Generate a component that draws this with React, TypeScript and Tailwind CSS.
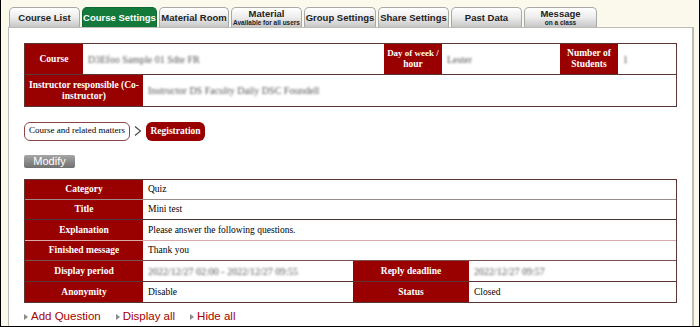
import React from 'react';

const tabs = [
  { label: 'Course List', w: 'w-[71px]' },
  { label: 'Course Settings', w: 'w-[75px]', active: true },
  { label: 'Material Room', w: 'w-[70px]' },
  { label: 'Material', sub: 'Available for all users', w: 'w-[71px]' },
  { label: 'Group Settings', w: 'w-[72px]' },
  { label: 'Share Settings', w: 'w-[71px]' },
  { label: 'Past Data', w: 'w-[71px]' },
  { label: 'Message', sub: 'on a class', w: 'w-[73px]' },
];

const serif = "font-['Liberation_Serif',serif]";
const sans = "font-['Liberation_Sans',Arial,sans-serif]";

function Head({ children, className = '' }: { children: React.ReactNode; className?: string }) {
  return (
    <div
      className={`flex items-center justify-center bg-[#990000] text-white font-bold text-[9.5px] leading-[11px] text-center px-[2px] ${className}`}
    >
      <span>{children}</span>
    </div>
  );
}

function Val({ children, blur, className = '' }: { children: React.ReactNode; blur?: boolean; className?: string }) {
  return (
    <div className={`flex items-center bg-white px-[5px] text-[9.5px] text-black ${className}`}>
      <span className={blur ? 'blur-[1px] text-[#555] text-[10px]' : ''}>{children}</span>
    </div>
  );
}

export default function App() {
  return (
    <div className="w-[700px] h-[327px] overflow-hidden bg-[#fbf8ec] border-l border-r border-b border-black">
      <div className="pl-[7px] pt-[7px]">
        {/* tabs */}
        <div className={`flex gap-[2px] ml-[1px] ${sans}`}>
          {tabs.map((t) => (
            <div
              key={t.label}
              className={`${t.w} h-[20px] rounded-t-[5px] border border-b-0 flex flex-col items-center justify-center font-bold ${
                t.active
                  ? 'bg-[#137a3b] border-[#0f6a32] text-white'
                  : 'bg-gradient-to-b from-white via-[#ececec] to-[#c6c6c6] border-[#a8a8a8] text-[#222]'
              }`}
            >
              <span className={t.sub ? 'text-[9.5px] leading-[10px]' : 'text-[9.5px] leading-[11px]'}>{t.label}</span>
              {t.sub && <span className="text-[6.5px] leading-[7px] whitespace-nowrap">{t.sub}</span>}
            </div>
          ))}
        </div>

        {/* panel */}
        <div className="w-[686px] h-[320px] bg-white border-l border-t border-r-2 border-[#bdbdb5] pl-[15px] pt-[15px]">
          {/* course info */}
          <div className={`w-[653px] border border-[#5b3535] ${serif}`}>
            <div className="flex h-[31px] border-b border-[#5b3535]">
              <Head className="w-[58px]">Course</Head>
              <Val blur className="w-[301px]">D3Efoo Sample 01 Sdte FR</Val>
              <Head className="w-[58px] !px-0">
                <span className="whitespace-nowrap text-[9px]">Day of week /</span>
                <br />
                hour
              </Head>
              <Val blur className="w-[118px]">Lester</Val>
              <Head className="w-[58px]">Number of Students</Head>
              <Val blur className="flex-1">1</Val>
            </div>
            <div className="flex h-[31px]">
              <Head className="w-[118px]">Instructor responsible (Co-instructor)</Head>
              <Val blur className="flex-1">Instructor DS Faculty Daily DSC Foundell</Val>
            </div>
          </div>

          {/* breadcrumb */}
          <div className={`flex items-center mt-[14px] h-[20px] ${serif}`}>
            <div className="h-[19px] w-[106px] rounded-[6px] border border-[#8d4646] flex items-center justify-center text-[9px] text-black whitespace-nowrap">
              Course and related matters
            </div>
            <svg className="w-[16px] h-[14px]" viewBox="0 0 16 14" fill="none">
              <path d="M5 2.5l5.5 4.5-5.5 4.5" stroke="#444" strokeWidth="1.1" />
            </svg>
            <div className="h-[19px] w-[59px] rounded-[6px] bg-[#990000] flex items-center justify-center text-[9.5px] font-bold text-white">
              Registration
            </div>
          </div>

          {/* modify */}
          <div
            className={`mt-[14px] w-[51px] h-[13px] rounded-[2px] bg-gradient-to-b from-[#a6a6a6] to-[#707070] text-white text-[11px] leading-[13px] flex items-center justify-center ${sans}`}
          >
            Modify
          </div>

          {/* details */}
          <div className={`mt-[11px] w-[653px] border border-[#5b3535] ${serif}`}>
            <div className="flex h-[20px] border-b border-[#9c8c8c]">
              <Head className="w-[118px]">Category</Head>
              <Val className="flex-1">Quiz</Val>
            </div>
            <div className="flex h-[20px] border-b border-[#4a3535]">
              <Head className="w-[118px]">Title</Head>
              <Val className="flex-1">Mini test</Val>
            </div>
            <div className="flex h-[21px] border-b border-[#d9aaaa]">
              <Head className="w-[118px]">Explanation</Head>
              <Val className="flex-1">Please answer the following questions.</Val>
            </div>
            <div className="flex h-[20px] border-b border-[#7a5050]">
              <Head className="w-[118px]">Finished message</Head>
              <Val className="flex-1">Thank you</Val>
            </div>
            <div className="flex h-[21px] border-b border-[#5b3535]">
              <Head className="w-[118px]">Display period</Head>
              <Val blur className="w-[210px]">2022/12/27 02:00 - 2022/12/27 09:55</Val>
              <Head className="w-[116px]">Reply deadline</Head>
              <Val blur className="flex-1">2022/12/27 09:57</Val>
            </div>
            <div className="flex h-[20px]">
              <Head className="w-[118px]">Anonymity</Head>
              <Val className="w-[210px]">Disable</Val>
              <Head className="w-[116px]">Status</Head>
              <Val className="flex-1">Closed</Val>
            </div>
          </div>

          {/* links */}
          <div className={`flex items-center mt-[5px] text-[11.5px] text-[#a50000] ${sans}`}>
            {['Add Question', 'Display all', 'Hide all'].map((l) => (
              <div key={l} className="flex items-center mr-[15px]">
                <svg className="w-[4px] h-[6px] mr-[3px]" viewBox="0 0 4 6">
                  <path d="M0 0l4 3-4 3z" fill="#8a8a8a" />
                </svg>
                <span>{l}</span>
              </div>
            ))}
          </div>
        </div>
      </div>
    </div>
  );
}
